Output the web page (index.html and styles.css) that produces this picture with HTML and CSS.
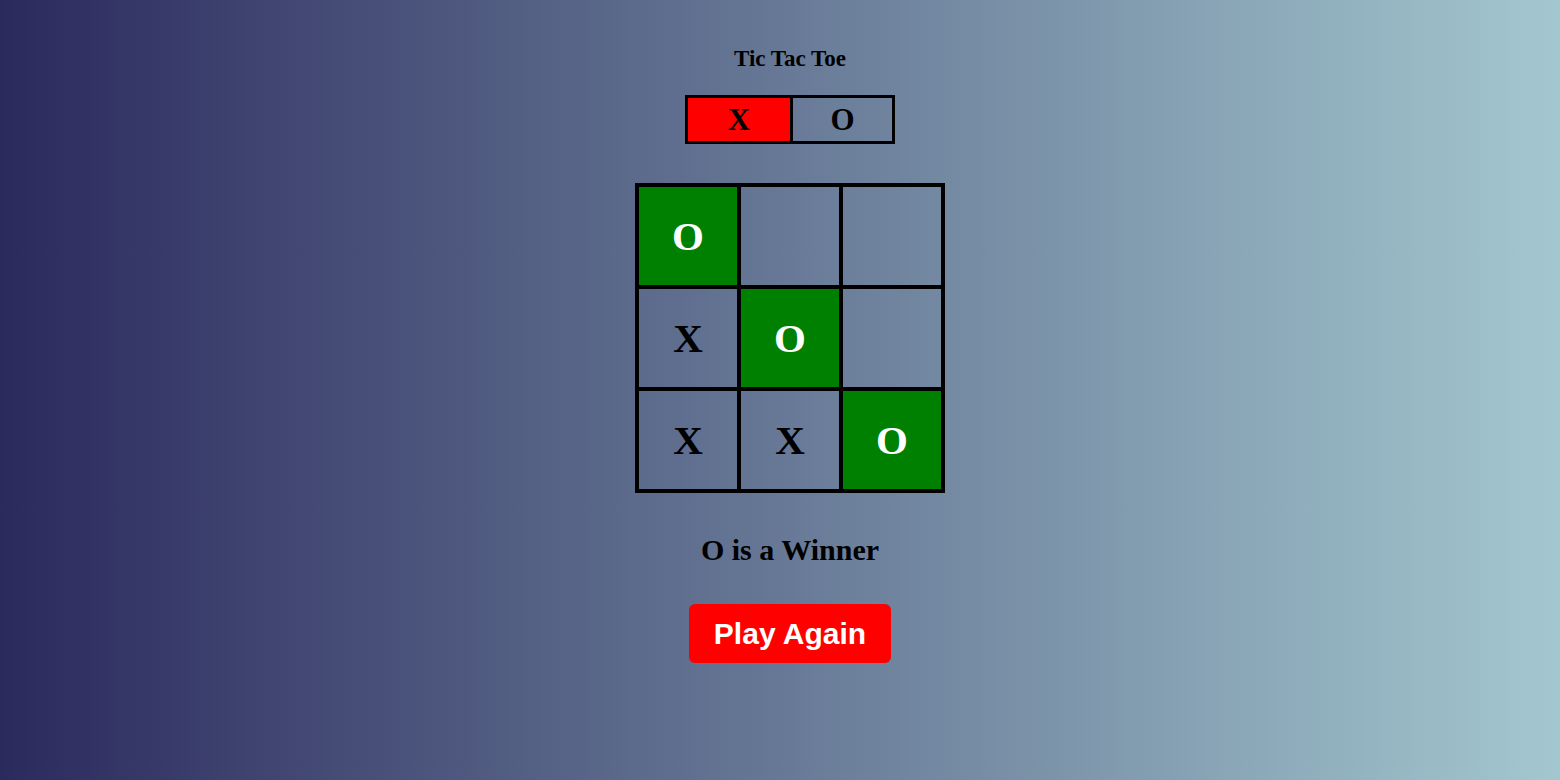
FILE: index.html
```html
<!DOCTYPE html>
<html>
<head>
<meta charset="utf-8">
<link rel="stylesheet" href="styles.css">
</head>
<body>
<main class="game">
  <h1 class="title">Tic Tac Toe</h1>
  <div class="turns">
    <div class="turn active">X</div>
    <div class="turn">O</div>
  </div>
  <div class="board">
    <div class="cell win">O</div>
    <div class="cell"></div>
    <div class="cell"></div>
    <div class="cell">X</div>
    <div class="cell win">O</div>
    <div class="cell"></div>
    <div class="cell">X</div>
    <div class="cell">X</div>
    <div class="cell win">O</div>
  </div>
  <h2 class="result">O is a Winner</h2>
  <button class="again">Play Again</button>
</main>
</body>
</html>
```
FILE: styles.css
```css
html, body {
  margin: 0;
  height: 100%;
}
body {
  background: linear-gradient(to right, #2b2a5d, #a3c7cf);
  font-family: "Liberation Serif", "Times New Roman", serif;
  color: #000;
}
.game {
  display: flex;
  flex-direction: column;
  align-items: center;
  padding-left: 20px;
  padding-top: 45px;
}
.title {
  margin: 0;
  font-size: 23px;
  font-weight: bold;
  line-height: 28px;
}
.turns {
  display: flex;
  margin-top: 22px;
  border: 3px solid #000;
}
.turn {
  width: 102px;
  height: 43px;
  display: flex;
  align-items: center;
  justify-content: center;
  font-size: 31px;
  font-weight: bold;
}
.turn + .turn {
  border-left: 3px solid #000;
  width: 99px;
}
.turn.active {
  background: #ff0000;
}
.board {
  display: grid;
  grid-template-columns: repeat(3, 102px);
  margin-top: 39px;
  border: 2px solid #000;
}
.cell {
  box-sizing: border-box;
  width: 102px;
  height: 102px;
  border: 2px solid #000;
  display: flex;
  align-items: center;
  justify-content: center;
  font-size: 41px;
  font-weight: bold;
}
.cell.win {
  background: #008000;
  color: #fff;
}
.result {
  margin: 39px 0 0;
  font-size: 30px;
  line-height: 36px;
  font-weight: bold;
}
.again {
  margin-top: 36px;
  width: 202px;
  height: 59px;
  border: none;
  border-radius: 6px;
  background: #ff0000;
  color: #fff;
  font-family: "Liberation Sans", Arial, sans-serif;
  font-size: 30px;
  font-weight: bold;
  padding: 0;
}
```
